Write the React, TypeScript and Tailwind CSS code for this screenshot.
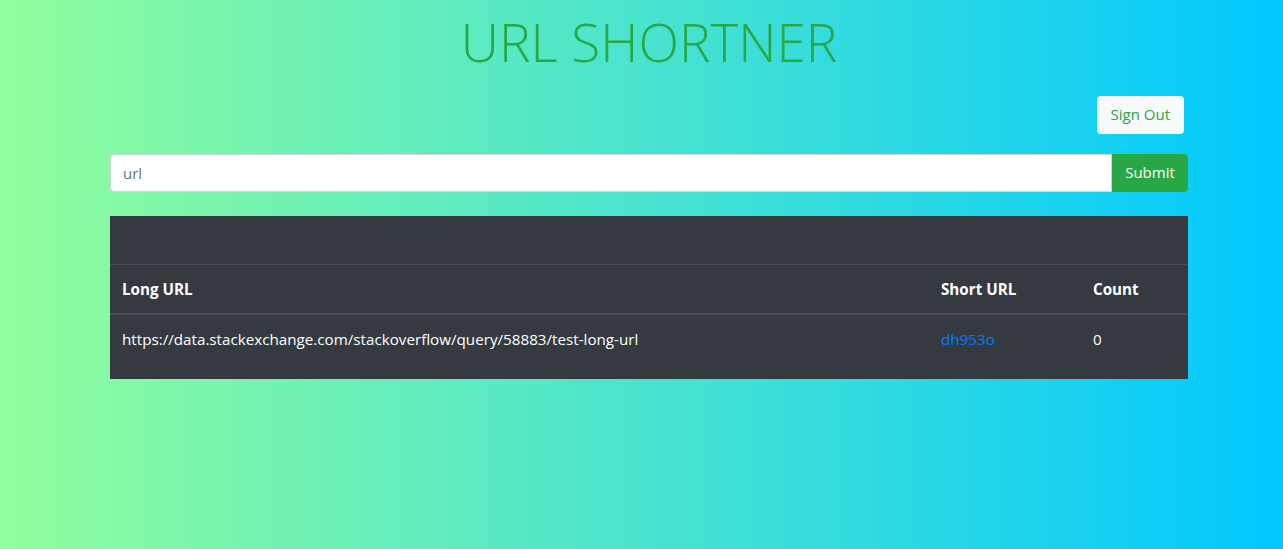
export default function App() {
  return (
    <div
      className="min-h-[549px] w-full bg-[linear-gradient(to_right,#92fe9d,#00c9ff)] text-base text-white"
      style={{ fontFamily: '"Open Sans", "Noto Sans", sans-serif' }}
    >
      <div className="ml-[110px] w-[1078px] pt-[10px]">
        <h1 className="text-center text-[53px] font-light leading-[1.2] text-[#28a745]">URL SHORTNER</h1>

        <div className="mt-[22px] flex justify-end pr-[4px]">
          <button className="h-[38px] rounded-[4px] bg-[#f8f9fa] px-[14px] text-[15px] text-[#28a745]">Sign Out</button>
        </div>

        <form className="mt-[20px] flex h-[38px]">
          <input
            placeholder="url"
            className="h-full flex-1 rounded-l-[4px] border border-[#ced4da] bg-white px-[12px] text-[15px] text-[#495057] placeholder:text-[#6c757d] outline-none"
          />
          <button type="button" className="h-full w-[76px] rounded-r-[4px] bg-[#28a745] text-[15px] text-white">
            Submit
          </button>
        </form>

        <table className="mt-[24px] w-full border-collapse bg-[#343a40] text-[15.2px] text-white">
          <thead>
            <tr className="h-[49px]">
              <th colSpan={3}></th>
            </tr>
            <tr className="border-t border-b-2 border-[#454d55]">
              <th className="w-[819px] px-[12px] py-[12px] text-left font-bold leading-6">Long URL</th>
              <th className="w-[152px] px-[12px] py-[12px] text-left font-bold leading-6">Short URL</th>
              <th className="px-[12px] py-[12px] text-left font-bold leading-6">Count</th>
            </tr>
          </thead>
          <tbody>
            <tr>
              <td className="px-[12px] pt-[12px] pb-[28px] leading-6">https://data.stackexchange.com/stackoverflow/query/58883/test-long-url</td>
              <td className="px-[12px] pt-[12px] pb-[28px] leading-6">
                <a href="#" className="text-[#007bff]">dh953o</a>
              </td>
              <td className="px-[12px] pt-[12px] pb-[28px] leading-6">0</td>
            </tr>
          </tbody>
        </table>
      </div>
    </div>
  );
}
